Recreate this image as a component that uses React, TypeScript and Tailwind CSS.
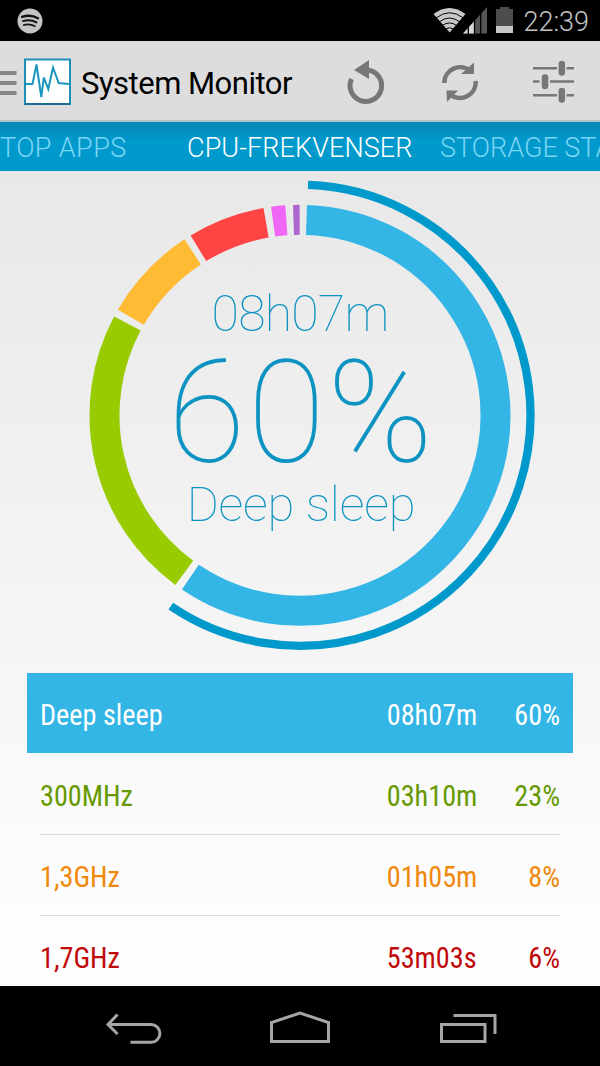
import React, { useState } from 'react';

type Slice = {
  from: number;
  to: number;
  color: string;
};

type Frequency = {
  label: string;
  time: string;
  percent: string;
  text: string;
};

const CENTER_X = 300;
const CENTER_Y = 244.3;

const slices: Slice[] = [
  { from: 1.9, to: 214.1, color: '#33b5e5' },
  { from: 216.3, to: 298, color: '#99cc00' },
  { from: 300.1, to: 326.7, color: '#ffbb33' },
  { from: 328.7, to: 350, color: '#ff4444' },
  { from: 352.1, to: 356, color: '#f066f5' },
  { from: 358.1, to: 359.9, color: '#aa66cc' },
];

const frequencies: Frequency[] = [
  { label: 'Deep sleep', time: '08h07m', percent: '60%', text: 'text-white' },
  { label: '300MHz', time: '03h10m', percent: '23%', text: 'text-[#669900]' },
  { label: '1,3GHz', time: '01h05m', percent: '8%', text: 'text-[#f0880c]' },
  { label: '1,7GHz', time: '53m03s', percent: '6%', text: 'text-[#c00808]' },
];

// Angles are in degrees, clockwise from 12 o'clock
const arc = (radius: number, from: number, to: number) => {
  const point = (deg: number) => {
    const rad = (deg * Math.PI) / 180;
    return `${CENTER_X + radius * Math.sin(rad)} ${CENTER_Y - radius * Math.cos(rad)}`;
  };
  return `M${point(from)} A${radius} ${radius} 0 ${to - from > 180 ? 1 : 0} 1 ${point(to)}`;
};

const StatusBar: React.FC = () => (
  <div className="flex h-[41px] shrink-0 items-center justify-between bg-black pl-[17px] pr-[11px]">
    <svg className="mt-px" width="26" height="26" viewBox="0 0 26 26" fill="none">
      <circle cx="13" cy="13" r="12.5" fill="#c4c4c4" />
      <g stroke="#111" strokeLinecap="round">
        <path d="M5 8.8C10.5 7.2 16.5 7.7 21 10.2" strokeWidth="2.4" />
        <path d="M6 13.1c4.7-1.3 9.5-.8 13.5 1.3" strokeWidth="2" />
        <path d="M6.7 17c4-1.1 8-.6 11.3 1.2" strokeWidth="1.7" />
      </g>
    </svg>
    <div className="flex items-center">
      <svg width="81" height="29" viewBox="433 6 81 29" fill="none">
        <path d="M433.5 14Q449.500 2 465.500 14L449.700 32.500z" fill="#c8c8c8" />
        <g stroke="#000" strokeWidth="1">
          <path d="M436 18q13.500-10.500 27.500 0" />
          <path d="M439 22q10.500-8 21 0" />
          <path d="M442 25.700q7.500-5.500 15 0" />
          <path d="M445 29.200q4.500-3 9 0" />
        </g>
        <path d="M463 33.500L487 7v26.500z" fill="#555" />
        <path d="M463 33.500L474 21.400v12.100z" fill="#d8d8d8" />
        <path d="M468.300 6v28M474.500 6v28M480.700 6v28" stroke="#000" strokeWidth="1.3" />
        <path d="M496 9h4V7h9v2h4v17h-17z" fill="#4d4d4d" />
        <path d="M496 26h17v7h-17z" fill="#c8c8c8" />
      </svg>
      <span className="ml-[9px] mt-[4px] text-[27px] font-light leading-none text-[#c4c4c4]">22:39</span>
    </div>
  </div>
);

const ActionBar: React.FC = () => (
  <header className="flex h-[81px] shrink-0 items-center border-b-2 border-[#b3c3ca] bg-[#dddddd] pt-[3px]">
    <svg width="72" height="50" viewBox="0 57 72 50" fill="none">
      <path d="M0 73h16.500M0 83h16.500M0 93h16.500" stroke="#858585" strokeWidth="4" />
      <path d="M25 59.500h45v44.500H25z" fill="#fff" stroke="#1b8fb8" strokeWidth="2" />
      <path d="M25 104h45" stroke="#176f91" strokeWidth="2" />
      <path d="M26 84h6.500L36.500 64.500 41.300 97 43.800 77.500 48.300 89 53 67.500 58.700 83 69 84" stroke="#1b96bd" strokeWidth="2" />
    </svg>
    <h1 className="ml-[9px] mt-[2px] whitespace-nowrap text-[31px] leading-none tracking-[-0.5px] text-black">System Monitor</h1>
    <div className="ml-auto flex items-center">
      <button aria-label="Reset">
        <svg className="block" width="94" height="50" viewBox="320 57 94 50" fill="none">
          <path d="M351.500 79A15.800 15.800 0 1 0 368 70" stroke="#777" strokeWidth="5" />
          <path d="M354 70L369 60v19z" fill="#777" />
        </svg>
      </button>
      <button aria-label="Refresh">
        <svg className="block" width="93" height="50" viewBox="414 57 93 50" fill="none" stroke="#777" strokeWidth="4.5">
          <path d="M444.300 83a15.700 15.700 0 0 1 26-12" />
          <path d="M475.700 81a15.700 15.700 0 0 1-26 13" />
          <path d="M474 62.500V74h-13zM446.500 90.500H458L447 102z" fill="#777" stroke="none" />
        </svg>
      </button>
      <button aria-label="Settings">
        <svg className="block" width="93" height="50" viewBox="507 57 93 50" fill="none" stroke="#777">
          <path d="M533 68.300h24M566.500 68.300h7.500M533 81.600h6.500M550 81.600h24M533 95.200h24M566.500 95.200h7.500" strokeWidth="2.5" />
          <path d="M561.800 64v8.500M545 77.500V86M561.800 91v8.500" strokeWidth="6.5" strokeLinecap="round" />
        </svg>
      </button>
    </div>
  </header>
);

const Tabs: React.FC = () => (
  <nav className="flex h-[49px] shrink-0 items-center overflow-hidden whitespace-nowrap bg-linear-to-b from-[#0788b7] to-[#0099cc] to-40% text-[27px] font-light leading-none">
    <span className="w-[187px] shrink-0 pt-[4px] tracking-[0.4px] text-[#7bd5f5]">TOP APPS</span>
    <span className="w-[253px] shrink-0 pt-[4px] font-[350] tracking-[0.1px] text-white">CPU-FREKVENSER</span>
    <span className="shrink-0 pt-[4px] text-[#7bd5f5]">STORAGE STATS</span>
  </nav>
);

const UsageChart: React.FC = () => (
  <section className="grid h-[502px] shrink-0">
    <svg className="col-start-1 row-start-1" width="600" height="502" viewBox="0 0 600 502" fill="none">
      {slices.map((slice) => (
        <path key={slice.color} d={arc(195.5, slice.from, slice.to)} stroke={slice.color} strokeWidth="30" />
      ))}
      <path d={arc(230.5, 2, 214.1)} stroke="#0099cc" strokeWidth="8.3" />
    </svg>
    <div className="col-start-1 row-start-1 flex flex-col items-center whitespace-nowrap pt-[118px] font-thin text-[#0c93c2]">
      <div className="text-[50px] leading-[50px] tracking-[-0.8px]">08h07m</div>
      <div className="mt-[15px] pl-[3px] text-[142px] leading-[120px] tracking-[2px]">60%</div>
      <div className="mt-[6px] pl-[2px] text-[49px] leading-[50px] tracking-[-0.2px]">Deep sleep</div>
    </div>
  </section>
);

const NavigationBar: React.FC = () => (
  <footer className="flex h-[80px] shrink-0 items-center justify-center bg-black">
    <svg width="600" height="80" viewBox="0 986 600 80" fill="none" stroke="#a6a6a6" strokeWidth="3">
      <path d="M108 1024.500h43a8.900 8.900 0 0 1 0 17.800h-20.500M117.500 1014.500l-9.500 10 9.500 9.500" />
      <path d="M271.500 1041.500v-19l28.500-9.500 28.500 9.500v19z" />
      <path d="M441.500 1024.500h43.500v17h-43.500zM453.500 1015.500H495v18.500" />
    </svg>
  </footer>
);

const App: React.FC = () => {
  const [selected, setSelected] = useState(0);

  return (
    <div className="flex h-[1066px] w-[600px] flex-col overflow-hidden bg-black font-['Roboto',sans-serif]">
      <StatusBar />
      <ActionBar />
      <Tabs />

      <main className="flex min-h-0 flex-1 flex-col overflow-hidden bg-linear-to-b from-[#e8e8e8] to-white">
        <UsageChart />
        <ul className="mx-[27px] flex shrink-0 flex-col">
          {frequencies.map((item, index) => (
            <li
              key={item.label}
              onClick={() => setSelected(index)}
              className={`px-[13px] first:mb-px ${index === selected ? 'bg-[#33b5e5]' : ''}`}
            >
              <div
                className={`flex items-center whitespace-nowrap font-['Roboto_Condensed','Roboto',sans-serif] text-[30px] leading-none [font-stretch:75%] ${item.text} ${
                  index === 0 ? 'h-[80px] pt-[3px]' : 'h-[81px] border-b border-[#dcdcdc] pt-[3px]'
                }`}
              >
                <span className="origin-left scale-x-94">{item.label}</span>
                <span className="ml-auto origin-right scale-x-94">{item.time}</span>
                <span className="w-[83px] origin-right scale-x-94 text-right">{item.percent}</span>
              </div>
            </li>
          ))}
        </ul>
      </main>

      <NavigationBar />
    </div>
  );
};

export default App;
